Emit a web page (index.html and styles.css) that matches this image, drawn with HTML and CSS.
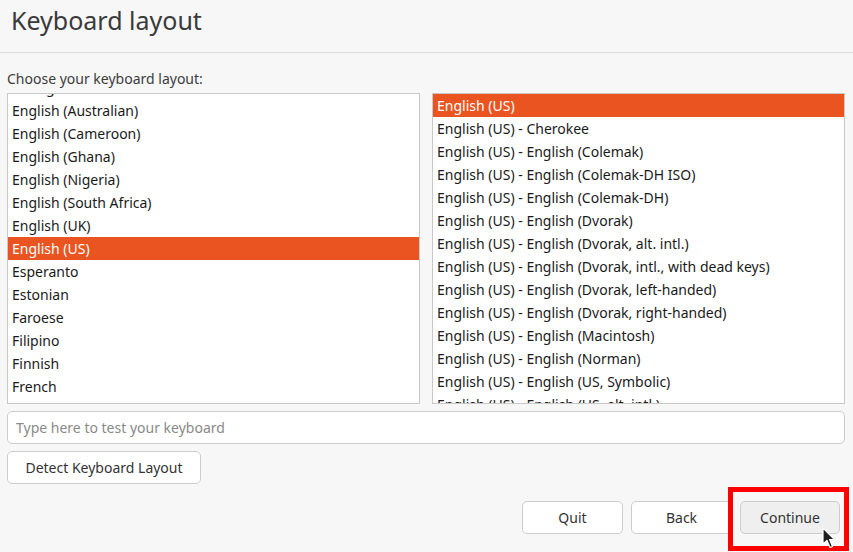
FILE: index.html
```html
<!DOCTYPE html>
<html>
<head>
<meta charset="utf-8">
<link rel="stylesheet" href="styles.css">
</head>
<body>
<div class="header"><h1 class="title">Keyboard layout</h1></div>
<div class="content">
  <div class="label">Choose your keyboard layout:</div>
  <div class="lists">
    <div class="list">
      <div class="rows rows-left">
        <div class="row">Dzongkha</div>
        <div class="row">English (Australian)</div>
        <div class="row">English (Cameroon)</div>
        <div class="row">English (Ghana)</div>
        <div class="row">English (Nigeria)</div>
        <div class="row">English (South Africa)</div>
        <div class="row">English (UK)</div>
        <div class="row sel">English (US)</div>
        <div class="row">Esperanto</div>
        <div class="row">Estonian</div>
        <div class="row">Faroese</div>
        <div class="row">Filipino</div>
        <div class="row">Finnish</div>
        <div class="row">French</div>
        <div class="row">French (Canada)</div>
      </div>
    </div>
    <div class="list">
      <div class="rows">
        <div class="row sel">English (US)</div>
        <div class="row">English (US) - Cherokee</div>
        <div class="row">English (US) - English (Colemak)</div>
        <div class="row">English (US) - English (Colemak-DH ISO)</div>
        <div class="row">English (US) - English (Colemak-DH)</div>
        <div class="row">English (US) - English (Dvorak)</div>
        <div class="row">English (US) - English (Dvorak, alt. intl.)</div>
        <div class="row">English (US) - English (Dvorak, intl., with dead keys)</div>
        <div class="row">English (US) - English (Dvorak, left-handed)</div>
        <div class="row">English (US) - English (Dvorak, right-handed)</div>
        <div class="row">English (US) - English (Macintosh)</div>
        <div class="row">English (US) - English (Norman)</div>
        <div class="row">English (US) - English (US, Symbolic)</div>
        <div class="row">English (US) - English (US, alt. intl.)</div>
      </div>
    </div>
  </div>
  <input class="test" type="text" placeholder="Type here to test your keyboard">
  <div class="detect-row"><button class="btn detect">Detect Keyboard Layout</button></div>
  <div class="actions">
    <button class="btn act">Quit</button>
    <button class="btn act">Back</button>
    <button class="btn act hover">Continue</button>
  </div>
</div>
<div class="highlight"></div>
<svg class="cursor" width="14" height="22" viewBox="0 0 14 22">
  <path d="M1 1 L1 17 L5 13.5 L8 20.5 L10.5 19.5 L7.6 12.6 L12.5 12.6 Z" fill="#1e1e1e" stroke="#ffffff" stroke-width="1.2" stroke-linejoin="round"/>
</svg>
</body>
</html>
```
FILE: styles.css
```css
html, body {
  margin: 0;
  padding: 0;
}
body {
  width: 853px;
  height: 552px;
  overflow: hidden;
  background: #f7f7f7;
  font-family: "Noto Sans", "DejaVu Sans", sans-serif;
  color: #1c1c1c;
  position: relative;
}
.header {
  height: 53px;
  border-bottom: 1px solid #dcdcdc;
  box-sizing: border-box;
  padding-left: 11px;
  display: flex;
  align-items: center;
}
.title {
  margin: 0;
  margin-top: -13px;
  font-size: 25px;
  font-weight: 400;
  color: #3a3a3a;
}
.content {
  padding: 0 8px 0 7px;
}
.label {
  font-size: 14px;
  color: #3c3c3c;
  height: 22px;
  line-height: 22px;
  margin-top: 15px;
  margin-bottom: 3px;
}
.lists {
  display: flex;
  gap: 12px;
  height: 311px;
}
.list {
  flex: 1;
  background: #ffffff;
  border: 1px solid #c9c9c9;
  overflow: hidden;
}
.rows-left {
  margin-top: -18px;
}
.row {
  box-sizing: border-box;
  height: 23px;
  padding-top: 1px;
  line-height: 22px;
  padding-left: 4px;
  font-size: 14px;
  white-space: nowrap;
  color: #1a1a1a;
}
.row.sel {
  background: #e95420;
  color: #ffffff;
}
.test {
  display: block;
  box-sizing: border-box;
  width: 100%;
  height: 33px;
  margin: 7px 0 0 0;
  padding: 0 8px;
  border: 1px solid #cdcdcd;
  border-radius: 5px;
  background: #ffffff;
  font-family: inherit;
  font-size: 14px;
  outline: none;
}
.test::placeholder {
  color: #8a8a8a;
}
.detect-row {
  margin-top: 7px;
}
.btn {
  box-sizing: border-box;
  height: 33px;
  border: 1px solid #cdcdcd;
  border-radius: 5px;
  background: #ffffff;
  font-family: inherit;
  font-size: 14px;
  color: #333333;
  padding: 0;
}
.detect {
  width: 194px;
}
.actions {
  display: flex;
  justify-content: flex-end;
  gap: 8px;
  margin-top: 17px;
  margin-right: 5px;
}
.act {
  width: 101px;
}
.act.hover {
  background: #efefef;
  width: 100px;
}
.highlight {
  position: absolute;
  left: 728px;
  top: 487px;
  width: 121px;
  height: 64px;
  box-sizing: border-box;
  border: 5px solid #ff0000;
}
.cursor {
  position: absolute;
  left: 822px;
  top: 527px;
}
```
